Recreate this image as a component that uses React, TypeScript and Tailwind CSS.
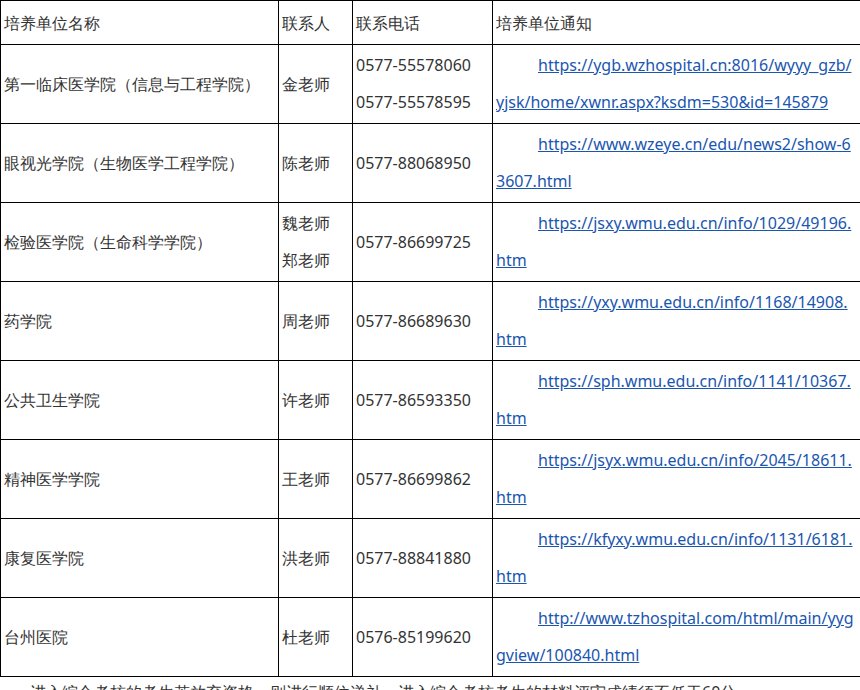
const rows = [
  { name: "第一临床医学院（信息与工程学院）", person: ["金老师"], phone: ["0577-55578060", "0577-55578595"], url: "https://ygb.wzhospital.cn:8016/wyyy_gzb/yjsk/home/xwnr.aspx?ksdm=530&id=145879" },
  { name: "眼视光学院（生物医学工程学院）", person: ["陈老师"], phone: ["0577-88068950"], url: "https://www.wzeye.cn/edu/news2/show-63607.html" },
  { name: "检验医学院（生命科学学院）", person: ["魏老师", "郑老师"], phone: ["0577-86699725"], url: "https://jsxy.wmu.edu.cn/info/1029/49196.htm" },
  { name: "药学院", person: ["周老师"], phone: ["0577-86689630"], url: "https://yxy.wmu.edu.cn/info/1168/14908.htm" },
  { name: "公共卫生学院", person: ["许老师"], phone: ["0577-86593350"], url: "https://sph.wmu.edu.cn/info/1141/10367.htm" },
  { name: "精神医学学院", person: ["王老师"], phone: ["0577-86699862"], url: "https://jsyx.wmu.edu.cn/info/2045/18611.htm" },
  { name: "康复医学院", person: ["洪老师"], phone: ["0577-88841880"], url: "https://kfyxy.wmu.edu.cn/info/1131/6181.htm" },
  { name: "台州医院", person: ["杜老师"], phone: ["0576-85199620"], url: "http://www.tzhospital.com/html/main/yyggview/100840.html" },
];

const cell = "border-[1.5px] border-black px-[3px] align-middle";

export default function App() {
  return (
    <div className="w-[860px] h-[690px] overflow-hidden bg-white text-[16px] text-[#333] font-['Open_Sans','Noto_Sans_CJK_SC',sans-serif]">
      <table className="w-[860px] table-fixed border-collapse">
        <colgroup>
          <col className="w-[278px]" />
          <col className="w-[74px]" />
          <col className="w-[140px]" />
          <col className="w-[368px]" />
        </colgroup>
        <thead>
          <tr className="h-[44px]">
            <td className={cell}>培养单位名称</td>
            <td className={cell}>联系人</td>
            <td className={cell}>联系电话</td>
            <td className={cell}>培养单位通知</td>
          </tr>
        </thead>
        <tbody>
          {rows.map((r) => (
            <tr key={r.name} className="h-[79px] leading-[37px]">
              <td className={cell}>{r.name}</td>
              <td className={cell}>
                {r.person.map((p) => <div key={p}>{p}</div>)}
              </td>
              <td className={cell}>
                {r.phone.map((p) => <div key={p}>{p}</div>)}
              </td>
              <td className={cell + " break-all indent-[42px]"}>
                <a href="#" className="text-[#1a56b0] underline">{r.url}</a>
              </td>
            </tr>
          ))}
        </tbody>
      </table>
      <p className="pl-[30px] pt-[3px] leading-[24px]">
        进入综合考核的考生若放弃资格，则进行顺位递补。进入综合考核考生的材料评审成绩须不低于60分。
      </p>
    </div>
  );
}
